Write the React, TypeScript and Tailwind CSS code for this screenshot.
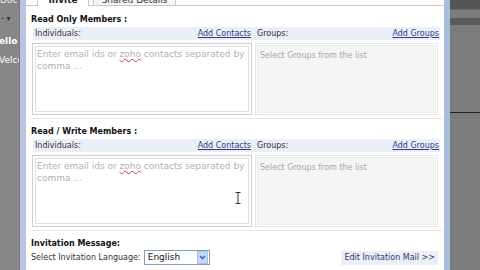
import React from "react"

const font = { fontFamily: '"DejaVu Sans", Verdana, sans-serif' }

function MemberBlock({ title, first }: { title: string; first?: boolean }) {
  return (
    <div className="flex flex-col">
      <div className={`${first ? "mt-[8px]" : "mt-[7px]"} h-[12px] leading-[12px] pl-[5px] text-[8px] font-bold text-[#111]`}>{title}</div>
      <div className="mt-[1px] ml-[7px] mr-[4px] h-[13px] flex items-center bg-[#e9eef8] text-[8px]">
        <div className="w-[219px] flex justify-between pl-[2px] pr-[1px]">
          <span className="text-[#333]">Individuals:</span>
          <span className="text-[#2b3f7e] underline">Add Contacts</span>
        </div>
        <div className="flex-1 flex justify-between pl-[5px] pr-[1px]">
          <span className="text-[#333]">Groups:</span>
          <span className="text-[#2b3f7e] underline">Add Groups</span>
        </div>
      </div>
      <div className="mt-[3px] ml-[6px] mr-[6px] h-[72px] flex gap-[3px]">
        <div className="w-[220px] border border-[#cfcfcf] p-[2px] bg-white">
          <div className="h-full border border-[#dcdcdc] px-[1px] pt-[1px] text-[9px] leading-[12px] text-[#b0b0b0] whitespace-nowrap overflow-hidden">
            Enter email ids or <span className="underline decoration-wavy decoration-[#d04040]">zoho</span> contacts separated by
            <br />
            comma ...
          </div>
        </div>
        <div className="flex-1 border border-[#e6e6e6] p-[1px] bg-white">
          <div className="h-full bg-[#f4f5f5] border border-[#ededed] pl-[2px] pt-[5px] text-[8px] leading-[10px] text-[#a8a8a8]">
            Select Groups from the list
          </div>
        </div>
      </div>
      <div className="mt-[3px] ml-[4px] mr-[2px] border-t border-[#e6e6e6]" />
    </div>
  )
}

export default function App() {
  return (
    <div className="w-[480px] h-[270px] flex overflow-hidden bg-white" style={font}>
      {/* left desktop strip */}
      <div className="w-[20px] bg-[#878787] flex flex-col text-white overflow-hidden whitespace-nowrap border-r border-[#777]">
        <div className="text-[9px] leading-[9px] -mt-[4px] text-[#eee]">Doc</div>
        <div className="mt-[10px] text-[8px] leading-[8px] text-[#333] pl-[1px]">- ▾</div>
        <div className="mt-[13px] text-[9px] font-bold leading-[10px] -ml-[1px]">ello</div>
        <div className="mt-[9px] text-[9px] leading-[10px] -ml-[1px]">Velcom</div>
      </div>
      <div className="w-[6px] bg-[#b7c5e2]" />

      {/* main panel */}
      <div className="flex-1 flex flex-col relative">
        {/* tabs */}
        <div className="h-[6px] flex items-end relative">
          <div className="w-[11px] h-full border-b border-[#c8c8c8]" />
          <div className="w-[52px] h-full border-x border-[#c8c8c8] bg-white flex justify-center overflow-hidden">
            <span className="text-[9px] font-bold leading-[9px] -mt-[4px] text-[#222]">Invite</span>
          </div>
          <div className="w-[4px] h-full border-b border-[#c8c8c8]" />
          <div className="w-[83px] h-full border-x border-b border-[#c8c8c8] bg-[#f6f6f6] flex justify-center overflow-hidden">
            <span className="text-[9px] leading-[9px] -mt-[4px] text-[#333]">Shared Details</span>
          </div>
          <div className="flex-1 h-full border-b border-[#c8c8c8]" />
        </div>

        <MemberBlock title="Read Only Members :" first />
        <MemberBlock title="Read / Write Members :" />

        <div className="mt-[7px] h-[12px] leading-[12px] pl-[5px] text-[8px] font-bold text-[#111]">Invitation Message:</div>
        <div className="h-[15px] flex items-center pl-[5px] pr-[6px] text-[8px]">
          <span className="text-[#333]">Select Invitation Language:</span>
          <div className="ml-[3px] w-[66px] h-[15px] border border-[#7f9db9] flex items-center bg-white">
            <span className="flex-1 pl-[3px] text-[9px] text-[#111]">English</span>
            <div className="w-[11px] h-[13px] mr-[1px] bg-[#c6d6f7] border border-[#a9bfe8] flex items-center justify-center">
              <svg width="7" height="5" viewBox="0 0 7 5">
                <path d="M1 1 L3.5 3.5 L6 1" stroke="#3a5ab0" strokeWidth="1.4" fill="none" />
              </svg>
            </div>
          </div>
          <div className="ml-auto h-[14px] px-[3px] flex items-center bg-[#eceef6] text-[#2b3a70]">Edit Invitation Mail &gt;&gt;</div>
        </div>

        {/* text cursor */}
        <svg className="absolute left-[209px] top-[192px]" width="6" height="12" viewBox="0 0 6 12">
          <path d="M0.5 0.5 H5.5 M3 0.5 V11.5 M0.5 11.5 H5.5" stroke="#333" strokeWidth="1" fill="none" />
        </svg>
      </div>

      <div className="w-[6px] bg-[#a9bbdf]" />
      {/* right desktop strip */}
      <div className="w-[30px] bg-[#7b7b7b] flex flex-col">
        <div className="h-[10px] bg-[#565656] border-b border-[#6a6a6a]" />
        <div className="mt-[8px] h-[7px] bg-[#5a5a5a]" />
        <div className="mt-[87px] h-[1px] bg-[#222]" />
      </div>
    </div>
  )
}
